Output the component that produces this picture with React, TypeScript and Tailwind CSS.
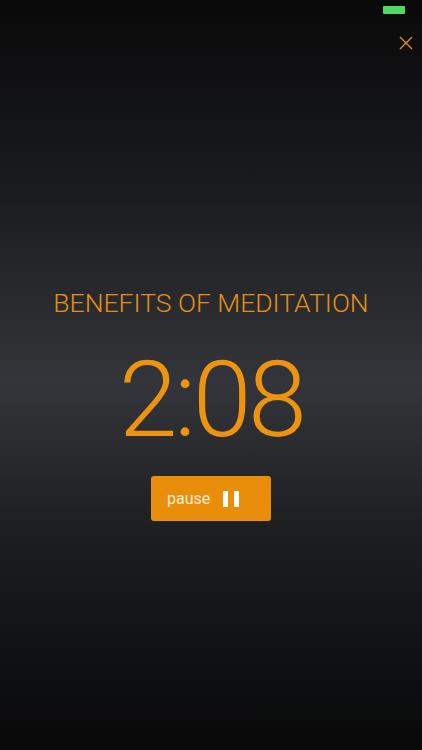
import React from "react";

export default function App() {
  return (
    <div
      className="relative w-[422px] h-[750px] overflow-hidden flex flex-col items-center"
      style={{
        background:
          "linear-gradient(to bottom, #09090a 0%, #1a1b1d 25%, #33353a 51%, #1c1d1f 72%, #0e0f10 90%, #09090a 100%)",
        fontFamily: "Roboto, 'Noto Sans', sans-serif",
      }}
    >
      <div className="absolute left-[383px] top-[6px] w-[22px] h-[8px] bg-[#4cd964] rounded-[1px]" />
      <svg
        className="absolute left-[399px] top-[36px]"
        width="14"
        height="14"
        viewBox="0 0 14 14"
        fill="none"
        stroke="#e8901a"
        strokeWidth="1.3"
      >
        <path d="M1 1 L13 13 M13 1 L1 13" />
      </svg>

      <div className="mt-[286px] text-[26.5px] font-light text-[#e28f17] leading-[34px]">
        BENEFITS OF MEDITATION
      </div>
      <div className="mt-[30px] text-[106px] font-light text-[#ec930f] leading-[100px] tracking-[-3.5px]">
        2:08
      </div>
      <button className="mt-[26px] w-[120px] h-[45px] rounded-[3px] bg-[#e88e0b] flex items-center pl-[16px]">
        <span className="text-[16px] text-[#fdebd0] font-normal">pause</span>
        <span className="ml-[13px] flex gap-[6px]">
          <span className="w-[5px] h-[16px] bg-white" />
          <span className="w-[5px] h-[16px] bg-white" />
        </span>
      </button>
    </div>
  );
}
